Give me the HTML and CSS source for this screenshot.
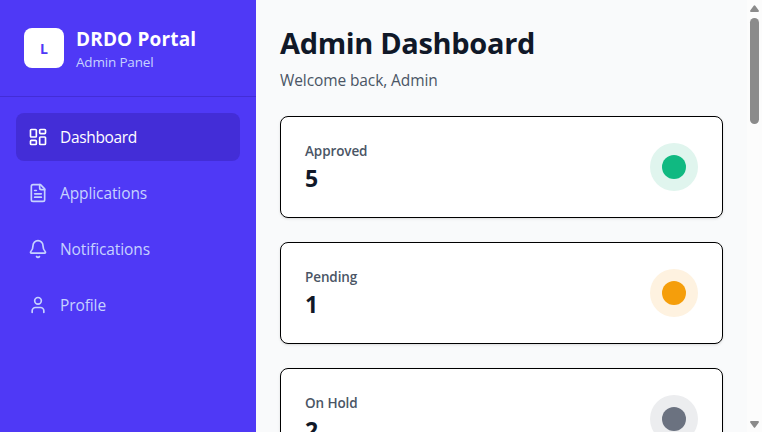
FILE: index.html
```
<!DOCTYPE html>
<html lang="en">
<head>
<meta charset="utf-8">
<title>Admin Dashboard</title>
<link rel="stylesheet" href="styles.css">
</head>
<body>
<div class="app">
  <aside class="sidebar">
    <div class="brand">
      <div class="logo">L</div>
      <div class="brand-text">
        <div class="brand-name"><span>DRDO Portal</span></div>
        <div class="brand-sub"><span>Admin Panel</span></div>
      </div>
    </div>
    <nav class="nav">
      <a class="item active">
        <svg class="icon" viewBox="0 0 24 24"><rect x="3" y="3" width="7" height="9" rx="1"/><rect x="14" y="3" width="7" height="5" rx="1"/><rect x="14" y="12" width="7" height="9" rx="1"/><rect x="3" y="16" width="7" height="5" rx="1"/></svg>
        <span>Dashboard</span>
      </a>
      <a class="item">
        <svg class="icon" viewBox="0 0 24 24"><path d="M15 2H6a2 2 0 0 0-2 2v16a2 2 0 0 0 2 2h12a2 2 0 0 0 2-2V7Z"/><path d="M14 2v4a2 2 0 0 0 2 2h4"/><path d="M10 9H8"/><path d="M16 13H8"/><path d="M16 17H8"/></svg>
        <span>Applications</span>
      </a>
      <a class="item">
        <svg class="icon" viewBox="0 0 24 24"><path d="M10.268 21a2 2 0 0 0 3.464 0"/><path d="M3.262 15.326A1 1 0 0 0 4 17h16a1 1 0 0 0 .74-1.673C19.41 13.956 18 12.499 18 8A6 6 0 0 0 6 8c0 4.499-1.411 5.956-2.738 7.326"/></svg>
        <span>Notifications</span>
      </a>
      <a class="item">
        <svg class="icon" viewBox="0 0 24 24"><path d="M19 21v-2a4 4 0 0 0-4-4H9a4 4 0 0 0-4 4v2"/><circle cx="12" cy="7" r="4"/></svg>
        <span>Profile</span>
      </a>
    </nav>
  </aside>
  <main class="main">
    <h1 class="title"><span>Admin Dashboard</span></h1>
    <p class="welcome"><span>Welcome back, Admin</span></p>
    <div class="cards">
      <section class="card green">
        <div class="stat"><div class="label"><span>Approved</span></div><div class="value">5</div></div>
        <div class="halo"><div class="dot"></div></div>
      </section>
      <section class="card amber">
        <div class="stat"><div class="label"><span>Pending</span></div><div class="value">1</div></div>
        <div class="halo"><div class="dot"></div></div>
      </section>
      <section class="card gray">
        <div class="stat"><div class="label"><span>On Hold</span></div><div class="value">2</div></div>
        <div class="halo"><div class="dot"></div></div>
      </section>
    </div>
  </main>
  <div class="scrollbar">
    <svg class="arrow" viewBox="0 0 9 7"><path d="M3.7.8Q4.5-.3 5.3.8L8.8 5.6Q9.2 7 8 7H1Q-.2 7 .2 5.6Z"/></svg>
    <div class="thumb"></div>
    <svg class="arrow down" viewBox="0 0 9 7"><path d="M3.7 6.2Q4.5 7.3 5.3 6.2L8.8 1.4Q9.2 0 8 0H1Q-.2 0 .2 1.4Z"/></svg>
  </div>
</div>
</body>
</html>
```
FILE: styles.css
```
* { box-sizing: border-box; margin: 0; padding: 0; }
body {
  height: 432px;
  overflow: hidden;
  font-family: "Segoe UI", "Open Sans", "Noto Sans", sans-serif;
  font-size: 16px;
  line-height: 24px;
  white-space: nowrap;
}
.app { display: flex; height: 432px; overflow: hidden; background: #f9fafb; }
.sidebar { width: 256px; flex: none; background: #4f39f6; color: #c6d2ff; }
.brand {
  display: flex;
  align-items: center;
  gap: 12px;
  height: 97px;
  padding: 0 24px;
  border-bottom: 1px solid #432dd7;
}
.logo {
  width: 40px;
  height: 40px;
  border-radius: 8px;
  background: #fff;
  color: #4f39f6;
  font-size: 14px;
  font-weight: 700;
  line-height: 41px;
  text-align: center;
}
.brand-text { padding-top: 2px; }
.brand-name { color: #fff; font-size: 19px; font-weight: 700; line-height: 25px; letter-spacing: 0.15px; }
.brand-sub { font-size: 13.5px; line-height: 20px; letter-spacing: -0.18px; }
.nav { display: flex; flex-direction: column; gap: 8px; padding: 16px; }
.item {
  display: flex;
  align-items: center;
  gap: 12px;
  height: 48px;
  padding: 0 12px;
  border-radius: 8px;
  font-size: 15.5px;
  letter-spacing: -0.1px;
}
.item.active { background: #432dd7; color: #fff; letter-spacing: -0.33px; }
.icon {
  width: 20px;
  height: 20px;
  fill: none;
  stroke: currentColor;
  stroke-width: 2;
  stroke-linecap: round;
  stroke-linejoin: round;
}
.main { flex: 1; padding: 24px 24px 0; }
.title { color: #101828; font-size: 29px; font-weight: 700; line-height: 36px; letter-spacing: -0.34px; padding-top: 1px; }
.welcome { color: #4a5565; font-size: 15.5px; margin-top: 7px; letter-spacing: -0.1px; }
.cards { display: grid; gap: 24px; margin-top: 24px; }
.card {
  display: flex;
  align-items: center;
  justify-content: space-between;
  height: 102px;
  padding: 0 24px;
  border: 1px solid #000;
  border-radius: 8px;
  background: #fff;
  box-shadow: 0 1px 3px rgba(0, 0, 0, .1), 0 1px 2px -1px rgba(0, 0, 0, .1);
}
.label { color: #4a5565; font-size: 13.5px; font-weight: 600; line-height: 20px; letter-spacing: -0.1px; }
.value { color: #101828; font-size: 23px; font-weight: 700; line-height: 32px; padding-top: 1px; margin-bottom: -1px; }
.halo { display: flex; align-items: center; justify-content: center; width: 48px; height: 48px; border-radius: 50%; }
.dot { width: 24px; height: 24px; border-radius: 50%; }
.green .halo { background: #e0f5ee; }
.green .dot { background: #10b981; }
.amber .halo { background: #fef2e0; }
.amber .dot { background: #f59e0b; }
.gray .halo { background: #ecedef; }
.gray .dot { background: #6b7280; }
.scrollbar {
  display: flex;
  flex-direction: column;
  align-items: center;
  width: 15px;
  flex: none;
  padding: 5px 0 4px;
  background: #fcfcfc;
}
.arrow { width: 9px; height: 7px; fill: #8b8b8b; }
.thumb { width: 9px; height: 106px; margin-top: 6px; border-radius: 5px; background: #8b8b8b; }
.down { margin-top: auto; }
```
